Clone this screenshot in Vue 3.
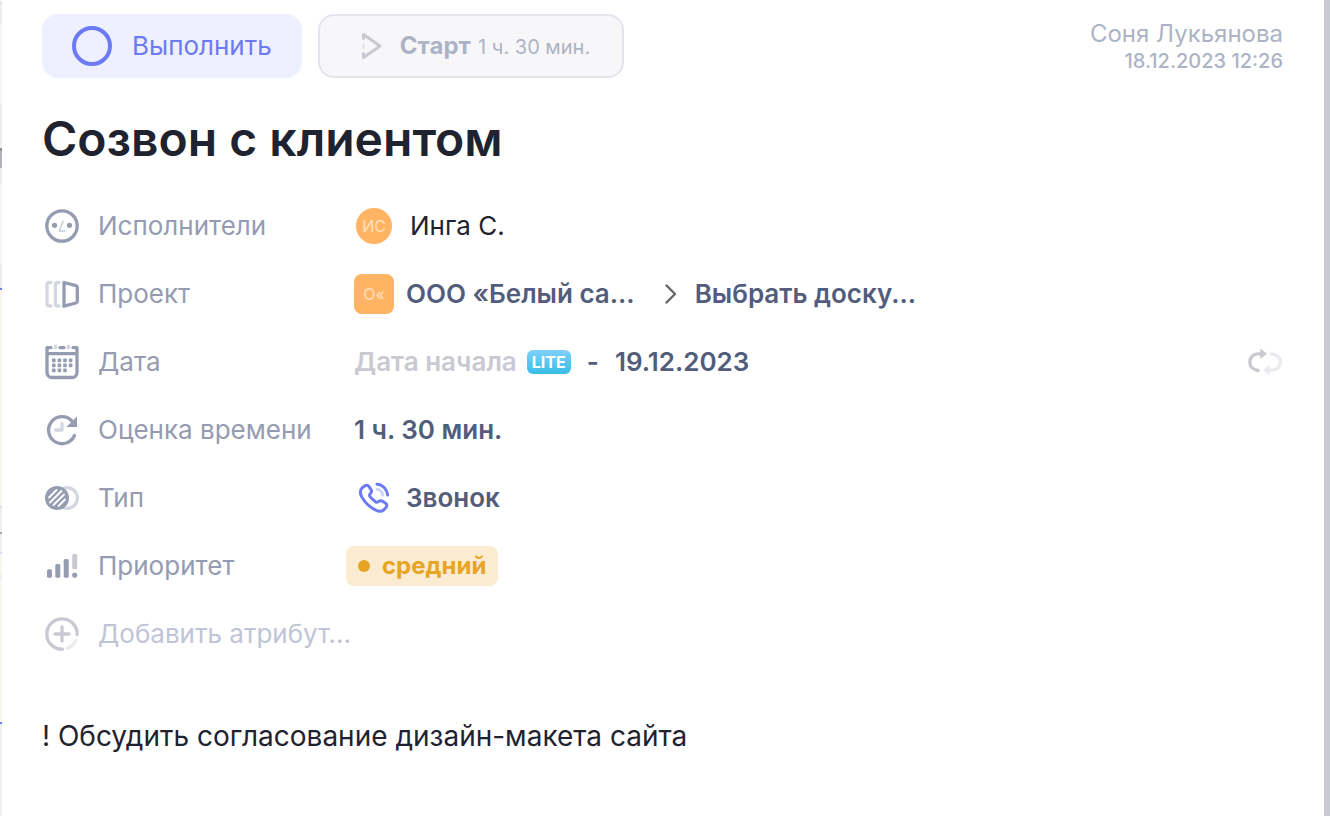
<template>
  <div class="page">
    <div class="board-edge"></div>

    <main class="task">
      <header class="top">
        <div class="actions">
          <button class="btn btn-done" type="button">
            <span class="ring"></span>
            Выполнить
          </button>
          <button class="btn btn-start" type="button">
            <svg class="play" viewBox="0 0 24 28">
              <path class="soft" d="M3.5 11.5V17" />
              <path d="M3.5 7.5V2.5L20 14L3.5 25.5V20.5" />
            </svg>
            <span class="start-text"><b>Старт</b> <small>1 ч. 30 мин.</small></span>
          </button>
        </div>
        <div class="author">
          <div class="author-name">Соня Лукьянова</div>
          <div class="author-date">18.12.2023 12:26</div>
        </div>
      </header>

      <h1 class="title">Созвон с клиентом</h1>

      <div class="fields">
        <div class="row">
          <svg class="icon" viewBox="0 0 36 36">
            <circle class="line" cx="18" cy="18" r="15.2" />
            <circle class="fill" cx="10.5" cy="17.3" r="2.6" />
            <circle class="fill" cx="25.5" cy="17.3" r="2.6" />
            <path class="line thin light" d="M19 13.5L15.3 23H20.5" />
          </svg>
          <span class="label">Исполнители</span>
          <div class="value">
            <span class="avatar">ИС</span>
            <span class="person">Инга С.</span>
          </div>
        </div>

        <div class="row">
          <svg class="icon" viewBox="0 0 36 36">
            <path class="line light" d="M7 6.5H5a2 2 0 0 0-2 2V28a2 2 0 0 0 2 2H7" />
            <path class="line light" d="M15 6.5H13.5a2 2 0 0 0-2 2V28a2 2 0 0 0 2 2H15" />
            <path class="line" d="M20 6.5L32 9.6Q33.3 10 33.3 11.5V25Q33.3 26.5 32 27L20 30.2Z" />
          </svg>
          <span class="label">Проект</span>
          <div class="value">
            <span class="avatar square">О«</span>
            <button class="pick" type="button">ООО «Белый са...</button>
            <svg class="chevron" viewBox="0 0 12 20"><path d="M1.5 1.5L10 10L1.5 18.5" /></svg>
            <button class="pick" type="button">Выбрать доску...</button>
          </div>
        </div>

        <div class="row">
          <svg class="icon" viewBox="0 0 36 36">
            <path class="line" d="M7 3.6H3V28.5a5 5 0 0 0 5 5H28a5 5 0 0 0 5-5V3.6H29M3 9.6H33M16 3.6H20" />
            <path class="line light butt" d="M11.5 0.8V5M24.5 0.8V5" />
            <rect v-for="d in dots" :key="d.x + '-' + d.y" class="fill" :x="d.x" :y="d.y" width="3.6" height="3.6" rx="0.8" />
          </svg>
          <span class="label">Дата</span>
          <div class="value">
            <button class="pick empty" type="button">Дата начала</button>
            <span class="lite">LITE</span>
            <span class="dash">-</span>
            <button class="pick" type="button">19.12.2023</button>
          </div>
          <button class="repeat" type="button" aria-label="Повтор">
            <svg class="icon" viewBox="0 0 36 36">
              <path class="line grey" d="M11 26.5C6 25.8 2.8 22.5 2.8 18C2.8 13 6.5 9.8 11 9.8H13" />
              <path class="grey-fill" d="M13.3 4.5L20 9.8L13.3 15.1Z" />
              <path class="line pale" d="M24 9.8C29 10 33.3 13 33.3 18C33.3 23 29.5 26.2 25 26.2H23" />
              <path class="pale-fill" d="M22.7 20.9L16 26.2L22.7 31.5Z" />
            </svg>
          </button>
        </div>

        <div class="row">
          <svg class="icon" viewBox="0 0 36 36">
            <path class="line" d="M30.5 23.5A13.5 13.5 0 1 1 27.5 8.5" />
            <path class="fill" d="M22.3 15L33 4.5V15Z" />
            <path class="line light" d="M18 11.5V18H11.5" />
          </svg>
          <span class="label">Оценка времени</span>
          <div class="value">
            <button class="pick" type="button">1 ч. 30 мин.</button>
          </div>
        </div>

        <div class="row">
          <svg class="icon" viewBox="0 0 36 36">
            <circle class="line light" cx="23" cy="18" r="10.4" />
            <circle class="fill" cx="13" cy="18" r="12" />
            <path class="stripes" d="M5 17.5L12.5 10M6 22.5L17.5 11M9.5 25L20 14.5M14.5 26L21 19.5" />
          </svg>
          <span class="label">Тип</span>
          <div class="value">
            <svg class="icon call" viewBox="0 0 36 36">
              <path d="M6 8L8.5 6C10.3 4.8 12 5.2 13 6.6L15 9.6C16 11.2 15.6 12.4 14.4 13.6C13.2 14.8 13.2 15.6 14.2 17L19 21.4C20.3 22.6 21 22.6 22.4 21.6C24 20.4 25.2 20.4 26.6 21.2L29.6 23.2C31.2 24.4 31.2 26 30 27.4L28 29.6C26 31.6 22.5 31.6 19.5 30C13.5 27 8.5 22 5.6 16.6C4 13.4 4 10 6 8Z" />
              <path d="M21 4.2C26.5 4.5 31 9 31.7 15" />
              <path class="soft" d="M21 9.3C24 9.8 26.2 12 26.7 15" />
            </svg>
            <button class="pick" type="button">Звонок</button>
          </div>
        </div>

        <div class="row">
          <svg class="icon" viewBox="0 0 36 36">
            <rect class="fill" x="3" y="21.3" width="5" height="8.5" rx="1.6" />
            <rect class="fill" x="11.3" y="16" width="5" height="13.8" rx="1.6" />
            <rect class="fill" x="19.7" y="11" width="5" height="18.8" rx="1.6" />
            <rect class="grey-fill" x="28.2" y="6" width="5" height="15.3" rx="1.6" />
            <rect class="fill" x="28.2" y="24.8" width="5" height="5" rx="2" />
          </svg>
          <span class="label">Приоритет</span>
          <div class="value">
            <button class="priority" type="button">средний</button>
          </div>
        </div>

        <div class="row">
          <svg class="icon" viewBox="0 0 36 36">
            <path class="line grey" d="M33.2 18.5A15.2 15.2 0 1 0 18.5 33.2M18 11V25M11 18H25" />
            <path class="line pale" d="M23.5 32.2A15.2 15.2 0 0 0 32 24.2" />
          </svg>
          <button class="label add" type="button">Добавить атрибут...</button>
        </div>
      </div>

      <p class="description">! Обсудить согласование дизайн-макета сайта</p>
    </main>

    <div class="scroll"></div>
  </div>
</template>

<script setup>
// точки календаря: 4 в ряд, в последнем ряду 3
const dots = []
for (let row = 0; row < 3; row++) {
  for (let col = 0; col < (row === 2 ? 3 : 4); col++) {
    dots.push({ x: 8 + col * 5.6, y: 14.6 + row * 5 })
  }
}
</script>

<style>
body {
  margin: 0;
  background: #fff;
}
</style>

<style scoped>
.page {
  display: flex;
  min-height: 100vh;
  background: #fff;
  font-family: Inter, "Liberation Sans", sans-serif;
  font-size: 26px;
  line-height: 32px;
  color: #1f2330;
}

/* край доски, которая видна под карточкой */
.board-edge {
  width: 2px;
  background: linear-gradient(
    #f4f4f6 0 2px, #e4e4e9 2px 4px, #ededf0 4px 24px, #f7f7f8 24px 104px,
    #ededf0 104px 148px, #8f8f98 148px 151px, #b4b4bc 151px 168px, #ededf0 168px 184px,
    #f7f7f8 184px 264px, #ededf0 264px 288px, #6c7af4 288px 290px, #faf6ee 290px 506px,
    #dddde2 506px 508px, #ededf2 508px 532px, #aaaab2 532px 534px, #ededf2 534px 552px,
    #dedeeb 552px 554px, #faf6ee 554px 574px, #efeff3 574px 580px, #faf6ee 580px 722px,
    #6c7af4 722px 724px, #eeeef0 724px
  );
}

.scroll {
  width: 6px;
  background: #c9c9d4;
}

.task {
  flex: 1;
  min-width: 0;
  padding: 14px 41px 40px 40px;
}

button {
  font: inherit;
  color: inherit;
  background: none;
  border: none;
  padding: 0;
  cursor: pointer;
}

.top {
  display: flex;
  justify-content: space-between;
}

.actions {
  display: flex;
  gap: 16px;
}

.btn {
  display: flex;
  align-items: center;
  height: 64px;
  box-sizing: border-box;
  border-radius: 16px;
}

.btn-done {
  gap: 20px;
  padding: 0 30px;
  background: #eff0ff;
  color: #6c7af4;
}

.ring {
  width: 40px;
  height: 40px;
  box-sizing: border-box;
  border: 4px solid #6c7af4;
  border-radius: 50%;
}

.btn-start {
  gap: 16px;
  padding: 0 32px 0 40px;
  background: #f7f7fa;
  border: 2px solid #e3e5ed;
  color: #adb3c6;
}

.btn-start b {
  font-size: 24px;
  font-weight: 700;
}

.btn-start small {
  font-size: 20px;
}

.play {
  width: 24px;
  height: 28px;
  fill: none;
  stroke: #c9c9d2;
  stroke-width: 3;
  stroke-linejoin: round;
}

.play .soft {
  stroke: #e6e6ea;
}

.author {
  padding-top: 6px;
  text-align: right;
  color: #adb3c6;
}

.author-name {
  font-size: 24px;
  line-height: 28px;
}

.author-date {
  font-size: 20px;
  line-height: 26px;
  font-weight: 500;
}

.title {
  margin: 29px 0 21px;
  font-size: 48px;
  line-height: 64px;
  font-weight: 600;
}

.row {
  display: flex;
  align-items: center;
  height: 68px;
  padding-left: 2px;
}

.icon {
  flex: none;
  display: block;
  width: 36px;
  height: 36px;
}

.fill {
  fill: #959bb1;
}

.line {
  fill: none;
  stroke: #959bb1;
  stroke-width: 3.3;
  stroke-linecap: round;
  stroke-linejoin: round;
}

.thin {
  stroke-width: 2;
}

.butt {
  stroke-linecap: butt;
}

.light {
  stroke: #d5d7e0;
}

.grey {
  stroke: #c9c9d2;
}

.pale {
  stroke: #ebebef;
}

.grey-fill {
  fill: #c9c9d2;
}

.pale-fill {
  fill: #ebebef;
}

.stripes {
  stroke: #fff;
  stroke-width: 1.8;
  stroke-linecap: round;
}

.label {
  width: 256px;
  margin-left: 18px;
  text-align: left;
  white-space: nowrap;
  color: #959bb1;
}

.add {
  color: #c0c4d6;
}

.value {
  display: flex;
  align-items: center;
  white-space: nowrap;
}

.avatar {
  width: 36px;
  height: 36px;
  margin: 0 18px 0 2px;
  border-radius: 50%;
  background: #ffb463;
  color: #ffe1c0;
  font-size: 16px;
  line-height: 36px;
  text-align: center;
}

.avatar.square {
  width: 40px;
  height: 40px;
  margin: 0 12px 0 0;
  border-radius: 8px;
  line-height: 40px;
}

.pick {
  color: #525d7c;
  font-weight: 600;
}

.empty {
  color: #c9c9d2;
}

.chevron {
  width: 12px;
  height: 20px;
  margin: 0 18px 0 30px;
  fill: none;
  stroke: #666;
  stroke-width: 2.4;
  stroke-linecap: round;
  stroke-linejoin: round;
}

.lite {
  width: 44px;
  margin-left: 10px;
  border-radius: 6px;
  background: linear-gradient(#7fd0fb, #38bde6);
  color: #fff;
  font-size: 16px;
  line-height: 24px;
  font-weight: 700;
  text-align: center;
}

.dash {
  margin: 0 16px;
  color: #525d7c;
  font-weight: 600;
}

.repeat {
  margin-left: auto;
}

.call {
  margin: 0 14px 0 2px;
  fill: none;
  stroke: #6c7af4;
  stroke-width: 3;
  stroke-linecap: round;
  stroke-linejoin: round;
}

.call .soft {
  stroke: #d0d4fb;
}

.priority {
  display: flex;
  align-items: center;
  gap: 12px;
  height: 40px;
  margin-left: -8px;
  padding: 0 12px;
  border-radius: 8px;
  background: #fbecd1;
  color: #e8a423;
  font-size: 24px;
  font-weight: 700;
}

.priority::before {
  content: "";
  width: 12px;
  height: 12px;
  border-radius: 50%;
  background: #e8a423;
}

.description {
  margin: 52px 0 0;
  font-size: 28px;
}
</style>
